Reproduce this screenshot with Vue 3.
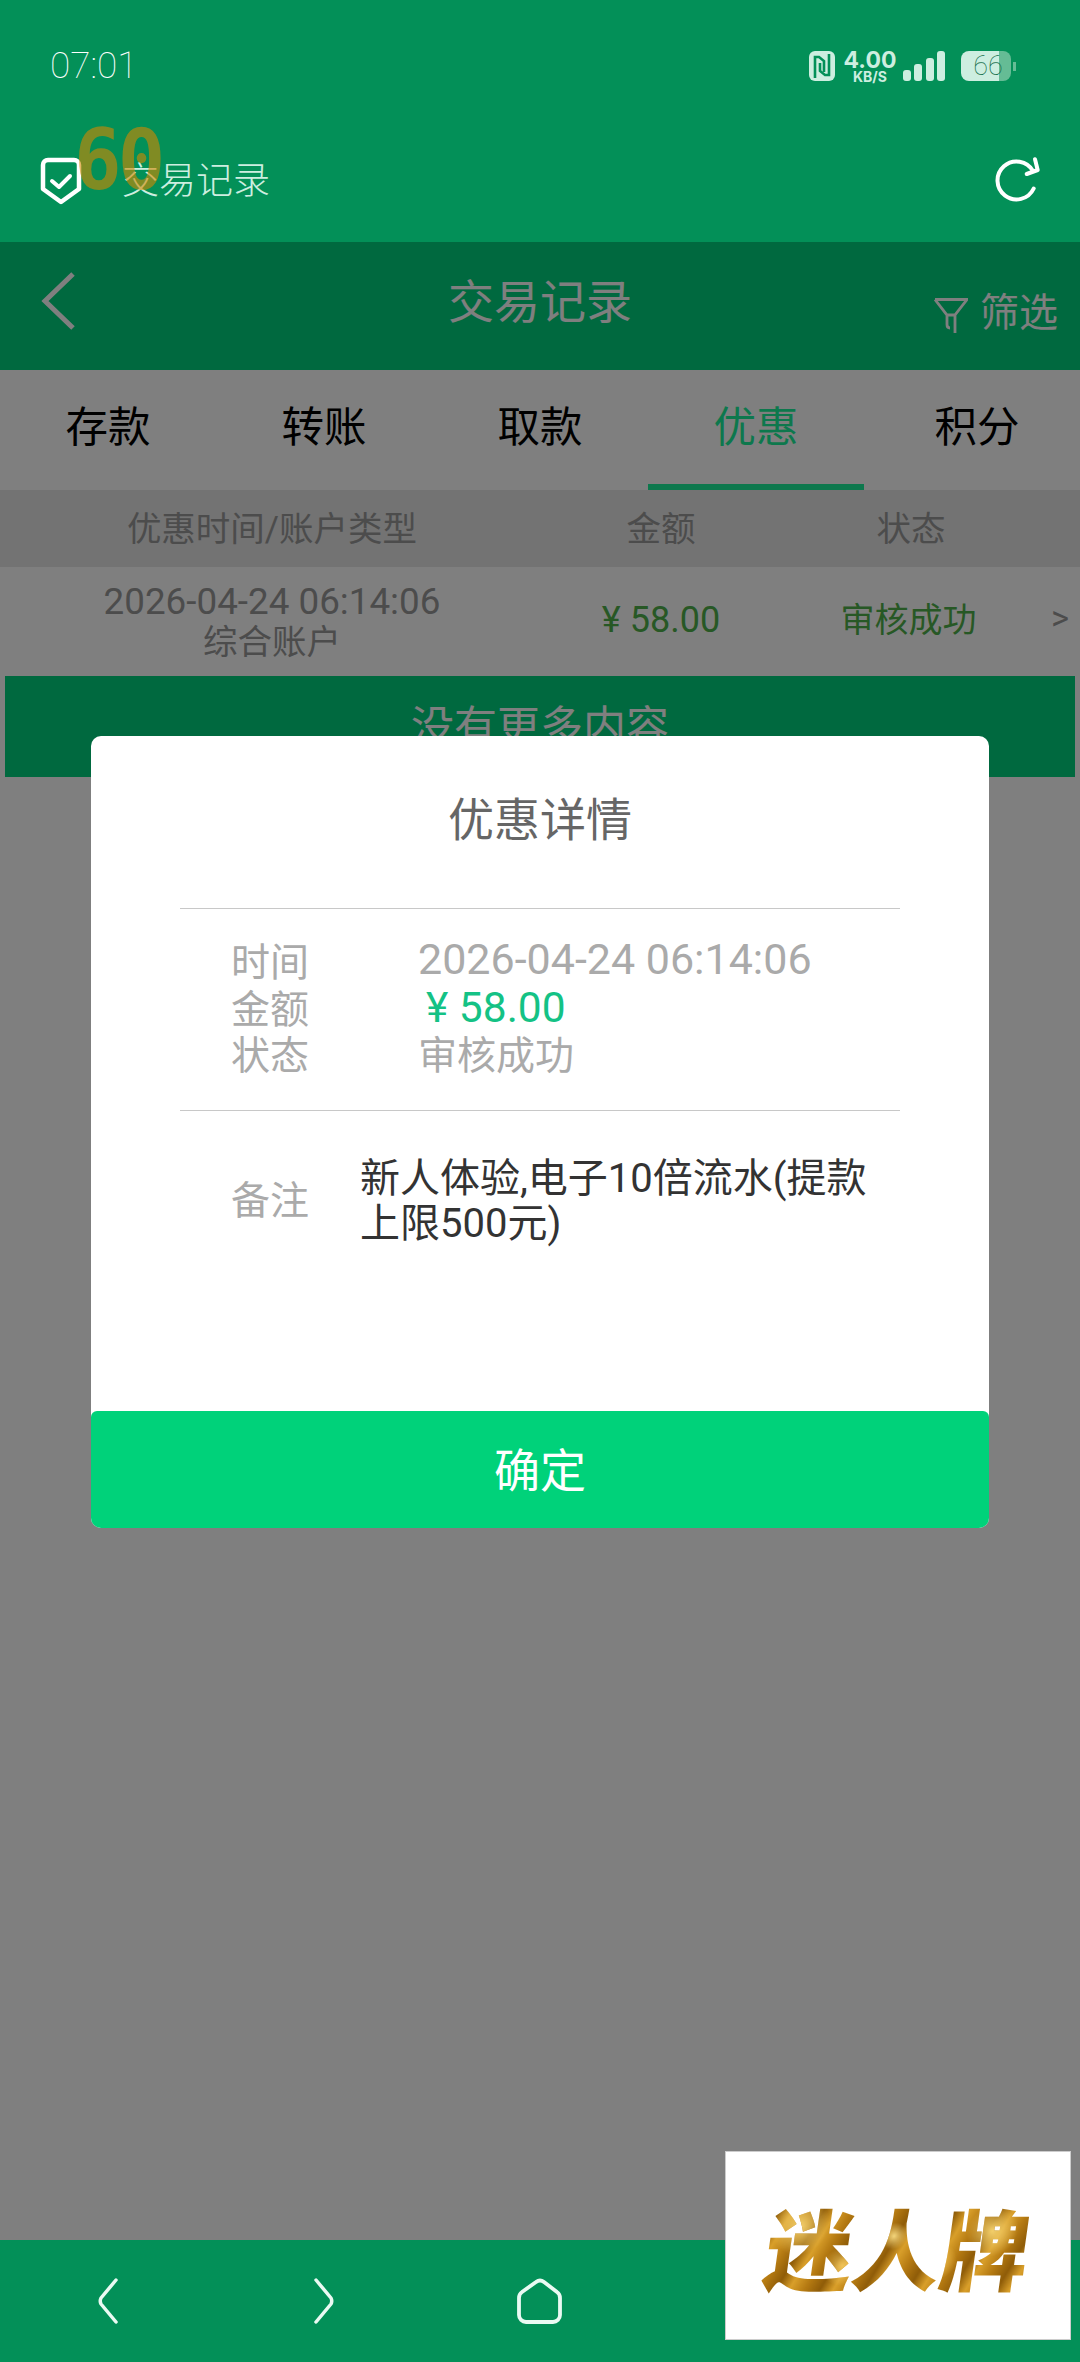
<template>
  <div class="phone">
    <div class="top-bar">
      <div class="status">
        <span class="time">07:01</span>
        <div class="status-icons">
          <svg class="nfc" viewBox="0 0 26 30" width="26" height="30">
            <rect width="26" height="30" rx="6" fill="#cdeee0"/>
            <path d="M6 27V6h4l5 4v11" fill="none" stroke="#039058" stroke-width="2.6"/>
            <path d="M20 3v21h-4l-5-4V12" fill="none" stroke="#039058" stroke-width="2.6"/>
          </svg>
          <div class="speed">
            <span class="speed-num">4.00</span>
            <span class="speed-unit">KB/S</span>
          </div>
          <div class="signal">
            <i style="height: 11px"></i>
            <i style="height: 17px"></i>
            <i style="height: 23px"></i>
            <i style="height: 30px"></i>
          </div>
          <div class="battery">
            <div class="battery-body">
              <span class="battery-num">66</span>
            </div>
            <i class="battery-tip"></i>
          </div>
        </div>
      </div>
      <div class="browser-row">
        <svg class="shield" viewBox="0 0 42 48" width="42" height="48">
          <path d="M8 3h26a5 5 0 0 1 5 5v24L21 45 3 32V8a5 5 0 0 1 5-5z" fill="none" stroke="#fff" stroke-width="4.5" stroke-linejoin="round"/>
          <path d="M12 24l7 6 11-11" fill="none" stroke="#fff" stroke-width="4" stroke-linecap="round" stroke-linejoin="round"/>
        </svg>
        <span class="browser-title">交易记录</span>
        <span class="fps">60</span>
        <svg class="refresh" viewBox="0 0 64 64" width="64" height="64">
          <path d="M48 21A19 19 0 1 0 48.700 38.500" fill="none" stroke="#fff" stroke-width="4" stroke-linecap="round"/>
          <path d="M41.700 24l11-4-2.700-10.700" fill="none" stroke="#fff" stroke-width="4" stroke-linecap="round" stroke-linejoin="round"/>
        </svg>
      </div>
    </div>

    <div class="page">
      <header class="header">
        <svg class="back" viewBox="0 0 36 60" width="36" height="60">
          <path d="M33 3L5 30l28 27" fill="none" stroke="#fff" stroke-width="5"/>
        </svg>
        <h1 class="title">交易记录</h1>
        <div class="filter">
          <svg viewBox="0 0 34 36" width="34" height="36">
            <path d="M1 1.500h32L21 17v18M13 17v9.500c0 2 1 3.500 3 3.500M1 1.500L13 17h8" fill="none" stroke="#fff" stroke-width="2.800"/>
          </svg>
          <span>筛选</span>
        </div>
      </header>

      <nav class="tabs">
        <div v-for="tab in tabs" :key="tab" :class="['tab', { 'tab--active': tab === '优惠' }]">{{ tab }}</div>
      </nav>

      <div class="table-head">
        <span class="col-main">优惠时间/账户类型</span>
        <span class="col-amount">金额</span>
        <span class="col-status">状态</span>
      </div>

      <div class="table-row">
        <div class="col-main">
          <div class="row-date">2026-04-24 06:14:06</div>
          <div>综合账户</div>
        </div>
        <span class="col-amount amount">¥ 58.00</span>
        <span class="col-status status-ok">审核成功</span>
        <span class="arrow">&gt;</span>
      </div>

      <div class="no-more">没有更多内容</div>

      <div class="mask"></div>

      <div class="dialog">
        <h2 class="dialog-title">优惠详情</h2>
        <div class="dialog-info">
          <div class="info-row">
            <span class="info-label">时间</span>
            <span class="info-value info-value--date">2026-04-24 06:14:06</span>
          </div>
          <div class="info-row">
            <span class="info-label">金额</span>
            <span class="info-value info-value--money">¥ 58.00</span>
          </div>
          <div class="info-row">
            <span class="info-label">状态</span>
            <span class="info-value">审核成功</span>
          </div>
        </div>
        <div class="dialog-note">
          <span class="info-label">备注</span>
          <p class="note-text">新人体验,电子10倍流水(提款上限500元)</p>
        </div>
        <button class="confirm">确定</button>
      </div>
    </div>

    <footer class="bottom-nav">
      <svg viewBox="0 0 20 46" width="20" height="46">
        <path d="M18 2L3 20q-1.500 3 0 6L18 44" fill="none" stroke="#eafaf3" stroke-width="3.500" stroke-linecap="round" stroke-linejoin="round"/>
      </svg>
      <svg viewBox="0 0 20 46" width="20" height="46">
        <path d="M2 2l15 18q1.500 3 0 6L2 44" fill="none" stroke="#eafaf3" stroke-width="3.500" stroke-linecap="round" stroke-linejoin="round"/>
      </svg>
      <svg viewBox="0 0 70 70" width="70" height="70">
        <path d="M31 17L17 27q-3 2-3 6v17a7 7 0 0 0 7 7h27a7 7 0 0 0 7-7V33q0-4-3-6L39 17q-4-3-8 0z" fill="none" stroke="#eafaf3" stroke-width="3.800" stroke-linejoin="round"/>
      </svg>
    </footer>

    <div class="brand"><span>迷人牌</span></div>
  </div>
</template>

<script setup>
const tabs = ['存款', '转账', '取款', '优惠', '积分']
</script>

<style>
html,
body {
  margin: 0;
  background: #808080;
}
</style>

<style scoped>
.phone {
  position: relative;
  width: 1080px;
  height: 2362px;
  display: flex;
  flex-direction: column;
  overflow: hidden;
  font-family: "Roboto", "Noto Sans CJK SC", sans-serif;
  background: #fff;
}

.top-bar {
  height: 242px;
  background: #039058;
  flex-shrink: 0;
}

.status {
  height: 133px;
  padding: 0 64px 0 50px;
  display: flex;
  justify-content: space-between;
  box-sizing: border-box;
}

.time {
  margin-top: 44px;
  font-size: 37px;
  line-height: 44px;
  font-weight: 100;
  color: #fff;
}

.status-icons {
  margin-top: 51px;
  height: 30px;
  display: flex;
  align-items: flex-start;
}

.nfc {
  margin-right: 9px;
}

.speed {
  width: 52px;
  display: flex;
  flex-direction: column;
  align-items: center;
  color: #cdeee0;
  font-family: "Inter", sans-serif;
  font-weight: 700;
  margin-right: 7px;
}

.speed-num {
  font-size: 23px;
  line-height: 19px;
}

.speed-unit {
  font-size: 14px;
  line-height: 13px;
}

.signal {
  width: 42px;
  height: 30px;
  display: flex;
  align-items: flex-end;
  justify-content: space-between;
  margin-right: 16px;
}

.signal i {
  width: 8px;
  border-radius: 3px;
  background: #cdeee0;
}

.battery {
  display: flex;
  align-items: center;
}

.battery-body {
  width: 50px;
  height: 30px;
  border-radius: 8px;
  background: linear-gradient(to right, #cdeee0 76%, #65bc95 76%);
  display: flex;
  align-items: center;
  justify-content: center;
  padding-left: 4px;
  box-sizing: border-box;
}

.battery-num {
  font-size: 27px;
  font-weight: 100;
  color: #17704c;
}

.battery-tip {
  width: 3px;
  height: 9px;
  margin-left: 2px;
  background: #65bc95;
}

.browser-row {
  position: relative;
  height: 109px;
  padding: 0 31px 0 40px;
  display: flex;
  align-items: flex-start;
}

.shield {
  margin-top: 24px;
}

.browser-title {
  margin: 24px 0 0 40px;
  font-size: 37px;
  line-height: 50px;
  font-weight: 300;
  color: #cdeee0;
}

.fps {
  position: absolute;
  left: 74px;
  top: -19px;
  font-family: "DejaVu Sans Mono", monospace;
  font-weight: 700;
  font-size: 84px;
  line-height: 92px;
  letter-spacing: -4px;
  color: rgba(211, 137, 0, 0.6);
  transform: scaleX(0.94);
  transform-origin: left center;
}

.refresh {
  margin: 17px 0 0 auto;
}

.page {
  position: relative;
  flex: 1;
  min-height: 0;
  display: flex;
  flex-direction: column;
}

.header {
  position: relative;
  height: 128px;
  flex-shrink: 0;
  background: #00d27f;
  display: flex;
  justify-content: center;
}

.back {
  position: absolute;
  left: 40px;
  top: 29px;
}

.title {
  margin: 0;
  padding-top: 27px;
  font-size: 46px;
  line-height: 66px;
  font-weight: 400;
  color: #fff;
}

.filter {
  position: absolute;
  left: 934px;
  top: 39px;
  display: flex;
  align-items: center;
  gap: 12px;
  color: #fff;
  font-size: 39px;
  white-space: nowrap;
}

.filter svg {
  margin-top: 14px;
}

.tabs {
  height: 120px;
  flex-shrink: 0;
  display: grid;
  grid-template-columns: repeat(5, 216px);
}

.tab {
  height: 116px;
  line-height: 116px;
  text-align: center;
  font-size: 42.5px;
  color: #000;
}

.tab:last-child {
  padding-left: 10px;
}

.tab--active {
  height: 114px;
  line-height: 116px;
  color: #1af09a;
  border-bottom: 6px solid #1af09a;
}

.table-head,
.table-row {
  display: flex;
  align-items: center;
  flex-shrink: 0;
  font-size: 34.5px;
  text-align: center;
}

.table-head {
  height: 77px;
  padding-bottom: 5px;
  box-sizing: border-box;
  background: #e6e6e6;
  color: #999;
}

.table-row {
  position: relative;
  height: 109px;
  color: #999;
  line-height: 40px;
}

.row-date {
  font-size: 36.800px;
}

.col-main {
  width: 544px;
}

.col-amount {
  width: 234px;
}

.col-status {
  width: 266px;
}

.amount,
.status-ok {
  color: #4fb04a;
  padding-bottom: 3px;
}

.amount {
  font-size: 36px;
}

.status-ok {
  font-size: 34px;
  box-sizing: border-box;
  padding-right: 5px;
}

.arrow {
  position: absolute;
  right: 11px;
  top: 31px;
  color: #999;
}

.no-more {
  height: 101px;
  margin: 0 5px;
  flex-shrink: 0;
  background: #00d27f;
  color: #fff;
  font-size: 43px;
  line-height: 102px;
  text-align: center;
}

.mask {
  position: absolute;
  inset: 0;
  background: rgba(0, 0, 0, 0.5);
}

.dialog {
  position: absolute;
  left: 91px;
  top: 494px;
  width: 898px;
  height: 792px;
  border-radius: 10px;
  background: #fff;
  display: flex;
  flex-direction: column;
}

.dialog-title {
  margin: 0;
  height: 172px;
  padding-top: 50px;
  box-sizing: border-box;
  text-align: center;
  font-size: 46px;
  line-height: 68px;
  font-weight: 400;
  color: #666;
}

.dialog-info {
  margin: 0 89px;
  padding: 27px 0 34px;
  border-top: 1px solid #c8c8c8;
  border-bottom: 1px solid #c8c8c8;
}

.info-row {
  height: 46.500px;
  display: flex;
  align-items: center;
}

.info-label {
  width: 238px;
  padding-left: 51px;
  box-sizing: border-box;
  flex-shrink: 0;
  font-size: 39px;
  color: #aaa;
}

.info-value {
  font-size: 39px;
  color: #aaa;
}

.info-value--date {
  font-size: 43px;
}

.info-value--money {
  margin-left: 8px;
  padding-top: 4px;
  font-size: 42.500px;
  color: #14c285;
}

.dialog-note {
  margin: 0 89px;
  padding-top: 45px;
  display: flex;
  align-items: center;
}

.dialog-note .info-label {
  width: 180px;
  margin-top: -8px;
}

.note-text {
  margin: 0;
  width: 530px;
  font-size: 40px;
  line-height: 45px;
  color: #333;
}

.confirm {
  margin-top: auto;
  height: 117px;
  padding-bottom: 6px;
  border: 0;
  border-radius: 6px 6px 10px 10px;
  background: #00d27a;
  color: #fff;
  font-family: inherit;
  font-size: 46px;
}

.bottom-nav {
  height: 122px;
  flex-shrink: 0;
  background: #039058;
  display: grid;
  grid-template-columns: 216px 216px 216px;
  justify-items: center;
  align-items: start;
  padding-top: 38px;
  box-sizing: border-box;
}

.bottom-nav svg:last-child {
  margin-top: -13px;
}

.brand {
  position: absolute;
  left: 725px;
  top: 2151px;
  width: 346px;
  height: 189px;
  box-sizing: border-box;
  border: 1px solid #ccc;
  background: #fff;
  display: flex;
  align-items: center;
  justify-content: center;
}

.brand span {
  font-family: "Noto Sans CJK SC", sans-serif;
  font-weight: 900;
  font-size: 88px;
  line-height: 100px;
  transform: skewX(-8deg);
  background:
    radial-gradient(circle at 12% 30%, #f3cf6b 0, transparent 12%),
    radial-gradient(circle at 30% 70%, #f0c45a 0, transparent 10%),
    radial-gradient(circle at 48% 40%, #f5d67c 0, transparent 9%),
    radial-gradient(circle at 66% 65%, #eebd4e 0, transparent 10%),
    radial-gradient(circle at 85% 35%, #f3cf6b 0, transparent 11%),
    repeating-linear-gradient(115deg, #b57a12 0, #8f5c08 14px, #d99f2a 26px, #b57a12 40px);
  -webkit-background-clip: text;
  background-clip: text;
  color: transparent;
}
</style>
